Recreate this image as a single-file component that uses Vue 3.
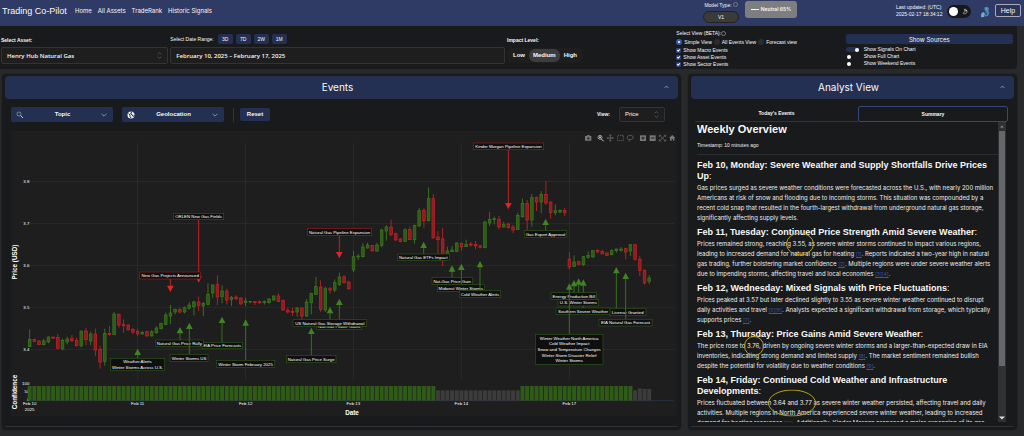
<script setup>
import { ref } from 'vue'

const asset = ref('Henry Hub Natural Gas')
const dateRange = ref('February 10, 2025 – February 17, 2025')
const viewMode = ref('Simple View')
const impact = ref('Medium')

const navLinks = ['Home', 'All Assets', 'TradeRank', 'Historic Signals']
const ranges = ['3D', '7D', '2W', '1M']
const impacts = ['Low', 'Medium', 'High']
const views = ['Simple View', 'All Events View', 'Forecast view']
const shownEvents = ['Show Macro Events', 'Show Asset Events', 'Show Sector Events']
const switches = [
  { label: 'Show Signals On Chart', on: true },
  { label: 'Show Full Chart', on: false },
  { label: 'Show Weekend Events', on: false },
]

// Chart units: one bar every STEP units, y grows downwards.
const X0 = 89
const STEP = 14.08
const barX = (i) => X0 + STEP * i

// direction, high, body top, body bottom, low
const candleRows = `
G 610 640 662 662;R 638 640 646 648;R 642 645 656 658;G 638 645 656 658;G 631 633 648 652;R 632 633 637 637;
R 624 634 667 669;G 637 643 669 673;G 632 639 648 655;R 627 638 644 648;R 635 643 659 662;G 614 615 660 664;
R 605 615 641 658;G 617 624 645 658;R 608 624 672 690;R 660 670 708 728;G 608 622 706 719;R 600 622 626 629;
G 558 564 626 627;R 562 565 597 605;R 580 596 599 620;R 595 597 612 613;R 606 610 618 625;R 608 616 624 630;
G 615 619 624 626;R 614 617 630 631;G 612 617 630 631;G 601 606 620 623;G 590 592 608 610;G 560 567 595 597;
G 537 561 570 594;G 548 550 558 565;R 546 550 558 562;G 542 545 558 562;G 528 537 547 550;G 524 528 542 568;
R 512 528 538 555;G 528 532 540 570;G 472 505 535 538;G 475 477 501 516;R 448 476 513 537;G 478 495 512 532;
R 488 495 522 535;G 510 514 520 540;R 508 513 518 523;R 514 516 534 536;G 515 525 530 540;G 525 526 528 532;
R 525 527 530 537;R 524 527 530 534;G 523 527 530 536;G 516 519 530 533;G 508 510 522 525;R 502 510 527 528;
R 520 523 552 555;R 545 553 558 562;R 545 556 559 570;G 543 546 558 572;R 545 546 570 580;G 520 528 570 573;
G 500 502 530 565;G 453 482 505 507;R 463 483 550 558;G 482 488 552 558;R 483 488 492 503;G 460 470 492 498;
G 440 453 475 480;R 448 452 470 473;R 464 468 488 492;G 375 392 432 438;G 384 390 393 402;G 352 363 392 394;
G 350 357 366 368;R 357 358 375 376;G 350 357 375 377;G 308 312 358 364;G 297 303 315 344;R 281 303 326 330;
R 320 323 342 344;R 336 339 347 349;G 307 311 346 348;R 301 311 341 342;G 296 298 341 353;G 246 254 300 302;
R 247 253 284 305;G 184 218 284 287;R 204 218 336 338;R 315 333 341 384;R 306 339 390 420;G 362 375 388 390;
G 360 372 377 378;G 349 351 376 378;R 350 352 363 375;G 341 355 362 363;R 348 354 357 362;R 345 355 360 370;
R 357 359 364 367;G 284 288 365 367;G 258 280 291 300;G 272 278 281 295;R 270 280 303 310;G 287 296 303 304;
R 290 294 305 308;R 297 303 312 322;G 260 268 311 312;G 218 232 272 275;R 222 232 282 315;G 204 215 282 302;
R 212 214 228 255;G 195 205 228 262;R 165 205 231 237;R 226 228 260 278;G 235 254 260 268;G 250 253 258 262;
R 246 253 260 270;R 378 399 423 430;G 388 408 421 423;R 404 407 415 418;G 390 392 416 420;G 377 388 394 398;
G 372 374 393 395;R 369 373 378 380;R 371 376 384 384;R 379 381 388 390;G 370 374 386 388;G 368 369 374 380;
G 363 369 373 377;R 365 368 378 400;G 355 356 375 390;R 355 356 400 404;R 390 400 433 450;R 430 433 471 475;
G 448 456 466 475`

const candles = candleRows
  .trim()
  .split(/;\s*/)
  .map((row, i) => {
    const [dir, high, top, bottom, low] = row.split(' ')
    return { x: barX(i), up: dir === 'G', high: +high, top: +top, height: bottom - top, low: +low }
  })

const confidence = candles.map((c, i) => {
  const neutral = (i > 86 && i < 105) || i > 128
  let top = 780
  if (neutral) top = i === 130 ? 787 : i > 130 ? 789 : 793
  return { x: c.x, neutral, top }
})

const days = [
  { x: 89, label: 'Feb 10' },
  { x: 413, label: 'Feb 11' },
  { x: 737, label: 'Feb 12' },
  { x: 1060, label: 'Feb 13' },
  { x: 1384, label: 'Feb 14' },
  { x: 1708, label: 'Feb 17' },
]
const prices = [
  { y: 167, label: '3.8' },
  { y: 293, label: '3.7' },
  { y: 418, label: '3.6' },
  { y: 544, label: '3.5' },
  { y: 670, label: '3.4' },
]

const note = (kind, x1, x2, y1, y2, ax, tip, ...lines) => ({ kind, x1, x2, y1, y2, ax, tip, lines })
const notes = [
  note('down', 520, 671, 262, 281, 596, 470, 'ORLEN New Gas Fields'),
  note('down', 419, 602, 438, 459, 511, 498, 'New Gas Projects Announced'),
  note('down', 922, 1115, 307, 328, 1018, 397, 'Natural Gas Pipeline Expansion'),
  note('down', 1420, 1631, 51, 71, 1525, 250, 'Kinder Morgan Pipeline Expansion'),
  note('up', 331, 494, 697, 734, 413, 668, 'Weather Alerts', 'Winter Storms Across U.S.'),
  note('up', 606, 727, 649, 668, 666, 572, 'EIA Price Forecasts'),
  note('up', 466, 610, 642, 661, 540, 603, 'Natural Gas Price Rally'),
  note('up', 510, 624, 685, 706, 568, 590, 'Winter Storms US'),
  note('up', 649, 824, 703, 724, 737, 580, 'Winter Storm February 2025'),
  note('up', 859, 1008, 688, 710, 934, 605, 'Natural Gas Price Surge'),
  note('up', 950, 1085, 590, 610, 990, 543, 'Nat-Gas Power Gains'),
  note('up', 879, 1100, 581, 601, 1018, 518, 'US Natural Gas Storage Withdrawal'),
  note('up', 1192, 1348, 384, 403, 1271, 347, 'Natural Gas ETFs Impact'),
  note('up', 1296, 1417, 455, 475, 1356, 418, 'Nat-Gas Price Gain'),
  note('up', 1312, 1453, 476, 496, 1384, 413, 'Midwest Winter Storms'),
  note('up', 1378, 1502, 494, 515, 1440, 405, 'Cold Weather Alerts'),
  note('up', 1573, 1700, 314, 334, 1637, 278, 'Gas Export Approval'),
  note('up', 1828, 1938, 547, 568, 1849, 423, 'License Granted'),
  note('up', 1668, 1830, 546, 566, 1750, 460, 'Southern Severe Weather'),
  note('up', 1674, 1796, 520, 540, 1736, 457, 'U.S. Winter Storms'),
  note('up', 1653, 1790, 500, 520, 1722, 462, 'Energy Production Bill'),
  note('up', 1797, 1956, 580, 600, 1877, 440, 'EIA Natural Gas Forecast'),
  note('up', 1606, 1809, 625, 715, 1708, 472,
    'Winter Weather North America', 'Cold Weather Impact', 'Snow and Temperature Changes',
    'Winter Storm Disaster Relief', 'Winter Storms'),
]
const lineY = (n, i) => (n.y1 + n.y2) / 2 + (i - (n.lines.length - 1) / 2) * 17 + 5
const arrowHead = (n) => {
  const back = n.kind === 'up' ? n.tip + 19 : n.tip - 19
  return `${n.ax},${n.tip} ${n.ax - 10},${back} ${n.ax + 10},${back}`
}
</script>

<template>
  <div class="app">
    <header class="topbar">
      <div class="brand">Trading Co-Pilot</div>
      <nav>
        <a v-for="l in navLinks" :key="l" href="#">{{ l }}</a>
      </nav>
      <div class="model">
        <span>Model Type: <i class="info"></i></span>
        <button class="v1">V1</button>
      </div>
      <div class="signal"><i></i>Neutral 65%</div>
      <div class="updated">Last updated: (UTC)<br />2025-02-17 18:34:12</div>
      <button class="theme" aria-label="Toggle theme">
        <i></i>
        <svg viewBox="0 0 12 12"><path d="M4 2a4 4 0 1 1-2 7 5 5 0 0 0 2-7z" fill="none" stroke="#ddd" /><path d="M7 3v3M5.500 4.500h3" stroke="#ddd" /></svg>
      </button>
      <svg class="mascot" viewBox="0 0 30 36">
        <path d="M14 4l8-2 5 5-2 7 3 6-4 9-8 3-2-9 3-7-4-6z" fill="#4d86b8" />
        <path d="M4 22l7-4 4 6-3 9-9 1zM17 8l4-1 1 4-4 1z" fill="#76a9cf" />
        <path d="M16 18l6 2-2 8-5-2z" fill="#2b5488" />
      </svg>
      <button class="help">Help</button>
    </header>

    <section class="filters">
      <div class="field">
        <label class="cap bold" for="asset">Select Asset:</label>
        <div class="selectbox">
          <select id="asset" v-model="asset"><option>Henry Hub Natural Gas</option></select>
          <svg viewBox="0 0 8 12"><path d="M1 4l3-3 3 3M1 8l3 3 3-3" /></svg>
        </div>
      </div>
      <div class="field">
        <div class="cap">
          <label for="dates">Select Date Range:</label>
          <button v-for="r in ranges" :key="r" class="range">{{ r }}</button>
        </div>
        <input id="dates" v-model="dateRange" class="dates" type="text" />
      </div>
      <div class="field">
        <div class="cap bold">Impact Level:</div>
        <div class="impact-row">
          <div class="segments">
            <button v-for="i in impacts" :key="i" :class="{ active: i === impact }" @click="impact = i">{{ i }}</button>
          </div>
        </div>
      </div>
      <div class="viewcol">
        <div class="line">Select View (BETA):<i class="info"></i></div>
        <div class="line radios">
          <label v-for="v in views" :key="v"><input v-model="viewMode" type="radio" name="view" :value="v" />{{ v }}</label>
        </div>
        <label v-for="e in shownEvents" :key="e" class="line check"><input type="checkbox" checked />{{ e }}</label>
      </div>
      <div class="sources">
        <button class="show">Show Sources</button>
        <label v-for="s in switches" :key="s.label" class="line switch">
          <input type="checkbox" :checked="s.on" /><span>{{ s.label }}</span>
        </label>
      </div>
    </section>

    <main>
      <section class="panel">
        <h2>Events<svg viewBox="0 0 8 5"><path d="M1 4l3-3 3 3" /></svg></h2>
        <div class="tools">
          <button class="drop">
            <svg viewBox="0 0 16 16"><circle cx="6" cy="6" r="4" /><path d="M9 9l5 5" stroke-width="2" /></svg>
            <span>Topic</span>
            <svg class="chev" viewBox="0 0 10 10"><path d="M1 3l4 4 4-4" /></svg>
          </button>
          <button class="drop">
            <svg viewBox="0 0 16 16"><circle cx="8" cy="8" r="7" fill="#f2f2f2" stroke="none" /><path d="M3 5l3 3v3l2 3M8 1l1 3-2 2 4 2 1 3 3-2" stroke="#233052" stroke-width="2" /></svg>
            <span>Geolocation</span>
            <svg class="chev" viewBox="0 0 10 10"><path d="M1 3l4 4 4-4" /></svg>
          </button>
          <i class="rule"></i>
          <button class="reset">Reset</button>
          <label class="viewlabel" for="series">View:</label>
          <div class="selectbox small">
            <select id="series"><option>Price</option></select>
            <svg viewBox="0 0 8 12"><path d="M1 4l3-3 3 3M1 8l3 3 3-3" /></svg>
          </div>
        </div>

        <svg class="chart" viewBox="33 15 1998 855" role="img" aria-label="Henry Hub Natural Gas price chart">
          <g class="grid">
            <path v-for="p in prices" :key="p.label" :d="`M88 ${p.y}H2022`" />
            <path v-for="d in days.slice(1)" :key="d.label" :d="`M${d.x} 50V762`" />
          </g>
          <g class="tick">
            <text v-for="p in prices" :key="p.label" x="88" :y="p.y + 5" text-anchor="end">{{ p.label }}</text>
            <text x="88" y="777" text-anchor="end">100</text>
            <text x="88" y="802" text-anchor="end">50</text>
            <text x="88" y="825" text-anchor="end">0</text>
            <text v-for="d in days" :key="d.label" :x="d.x" y="838" text-anchor="middle">{{ d.label }}</text>
            <text x="89" y="854" text-anchor="middle">2025</text>
          </g>
          <text class="axis" x="1056" y="867" text-anchor="middle">Date</text>
          <text class="axis" transform="translate(52 408) rotate(-90)" text-anchor="middle">Price (USD)</text>
          <text class="axis" transform="translate(52 798) rotate(-90)" text-anchor="middle">Confidence</text>

          <path d="M88 824H2022" stroke="#2c3a55" stroke-width="2" />
          <rect v-for="b in confidence" :key="b.x" :x="b.x - 6" :y="b.top" width="12" :height="824 - b.top" :class="b.neutral ? 'neutral' : 'sure'" />

          <g v-for="c in candles" :key="c.x" :class="c.up ? 'up' : 'down'">
            <path class="wick" :d="`M${c.x} ${c.high}V${c.low}`" />
            <rect class="body" :x="c.x - 4" :y="c.top" width="8" :height="c.height" />
          </g>

          <g v-for="n in notes" :key="n.lines[0]" :class="['note', n.kind]">
            <path class="stem" :d="n.kind === 'up' ? `M${n.ax} ${n.tip + 12}V${n.y1}` : `M${n.ax} ${n.y2}V${n.tip - 12}`" />
            <polygon :points="arrowHead(n)" />
            <rect class="frame" :x="n.x1" :y="n.y1" :width="n.x2 - n.x1" :height="n.y2 - n.y1" />
            <text v-for="(t, i) in n.lines" :key="t" :x="(n.x1 + n.x2) / 2" :y="lineY(n, i)" text-anchor="middle">{{ t }}</text>
          </g>

          <g class="modebar">
            <path class="solid" d="M1755 30h5l2-3h6l2 3h4v14h-19z" />
            <circle cx="1765" cy="37" r="4" fill="#1e1e1e" />
            <g class="on"><circle cx="1800" cy="34" r="6" /><path d="M1804 39l7 7M1797 34h6M1800 31v6" stroke-width="3" /></g>
            <path d="M1831 27v18M1822 36h18M1828 29l3-3 3 3M1828 43l3 3 3-3M1825 33l-3 3 3 3M1837 33l3 3-3 3" />
            <rect x="1853" y="28" width="17" height="16" stroke-dasharray="4 2" />
            <path d="M1886 42c-8-6-4-14 5-14s12 9 4 12c-4 1-8-1-9 2l3 4" />
            <rect class="solid" x="1920" y="28" width="18" height="17" /><path d="M1929 32v9M1924 36h10" stroke="#1e1e1e" stroke-width="3" />
            <rect class="solid" x="1949" y="28" width="18" height="17" /><path d="M1953 36h10" stroke="#1e1e1e" stroke-width="3" />
            <path d="M1979 28l17 17M1996 28l-17 17M1978 33v-5h5M1992 28h5v5M1997 40v5h-5M1983 45h-5v-5" />
            <path class="solid" d="M2007 36l10-9 9 9h-3v8h-4v-5h-4v5h-5v-8z" />
          </g>
        </svg>
        <i class="foot"></i>
      </section>

      <section class="panel">
        <h2>Analyst View<svg viewBox="0 0 8 5"><path d="M1 4l3-3 3 3" /></svg></h2>
        <div class="tabs">
          <button>Today's Events</button>
          <button class="current">Summary</button>
        </div>
        <div class="scroller">
          <article>
            <h1>Weekly Overview</h1>
            <p class="stamp">Timestamp: 10 minutes ago</p>
            <h3>Feb 10, Monday: Severe Weather and Supply Shortfalls Drive Prices Up<span>:</span></h3>
            <p>Gas prices surged as severe weather conditions were forecasted across the U.S., with nearly 200 million Americans at risk of snow and flooding due to incoming storms. This situation was compounded by a recent cold snap that resulted in the fourth-largest withdrawal from underground natural gas storage, significantly affecting supply levels.</p>
            <h3>Feb 11, Tuesday: Continued Price Strength Amid Severe Weather<span>:</span></h3>
            <p>Prices remained strong, reaching <span class="mark">3.55,<svg class="ring r1" viewBox="0 0 28 23"><ellipse cx="14" cy="11.500" rx="13.500" ry="11" /></svg></span> as severe winter storms continued to impact various regions, leading to increased demand for natural gas for heating <a href="#">[1]</a>. Reports indicated a two-year high in natural gas trading, further bolstering market confidence <a href="#">[2]</a>. Multiple regions were under severe weather alerts due to impending storms, affecting travel and local economies <a href="#">[3][4]</a>.</p>
            <h3>Feb 12, Wednesday: Mixed Signals with Price Fluctuations<span>:</span></h3>
            <p>Prices peaked at 3.57 but later declined slightly to 3.55 as severe winter weather continued to disrupt daily activities and travel <a href="#">[5][6]</a>. Analysts expected a significant withdrawal from storage, which typically supports prices <a href="#">[7]</a>.</p>
            <h3>Feb 13, Thursday: Price Gains Amid Severe Weather<span>:</span></h3>
            <p>The price rose to <span class="mark">3.76,<svg class="ring r2" viewBox="0 0 20 20"><ellipse cx="10" cy="10" rx="9.500" ry="9.500" /></svg></span> driven by ongoing severe winter storms and a larger-than-expected draw in EIA inventories, indicating strong demand and limited supply <a href="#">[8]</a>. The market sentiment remained bullish despite the potential for volatility due to weather conditions <a href="#">[9]</a>.</p>
            <h3>Feb 14, Friday: Continued Cold Weather and Infrastructure Developments<span>:</span></h3>
            <p>Prices fluctuated between <span class="mark">3.64 and 3.77<svg class="ring r3" viewBox="0 0 48 27"><ellipse cx="24" cy="13.500" rx="23.500" ry="13" /></svg></span> as severe winter weather persisted, affecting travel and daily activities. Multiple regions in North America experienced severe winter weather, leading to increased demand for heating resources <a href="#">[10]</a>. Additionally, Kinder Morgan proposed a major expansion of its gas</p>
          </article>
          <div class="scrollbar" aria-hidden="true">
            <svg viewBox="0 0 8 8"><path d="M2 5l2-2 2 2z" /></svg>
            <i></i>
            <svg class="end" viewBox="0 0 8 8"><path d="M1 3l3 3 3-3z" fill="#ddd" /></svg>
          </div>
        </div>
        <i class="foot"></i>
      </section>
    </main>
  </div>
</template>

<style>
html, body { background: #28292b; }
</style>

<style scoped>
.app { height: 100vh; display: flex; flex-direction: column; overflow: hidden; color: #f8f8f8; font: 5px/7px "Liberation Sans", Arial, sans-serif; background: #28292b; }
.app *, .app *::before { box-sizing: border-box; }
button, input, select { font: inherit; color: inherit; margin: 0; padding: 0; border: 0; background: none; }
a { color: inherit; text-decoration: none; }
i { display: block; }
svg { fill: none; stroke: #ccc; display: block; }

.topbar { height: 26px; flex: none; display: flex; align-items: center; background: #2f3b65; padding: 0 3px 0 2px; }
.brand { font-size: 9px; line-height: 12px; margin-bottom: 4px; width: 73px; white-space: nowrap; }
nav { display: flex; gap: 6px; font: 6px/8px Inter, sans-serif; margin-bottom: 4px; flex: 1; white-space: nowrap; }
.model { display: flex; flex-direction: column; align-items: center; gap: 2px; height: 22px; width: 36px; white-space: nowrap; }
.model span { display: flex; gap: 1px; }
.info { width: 5px; height: 5px; border: 1px solid #777; border-radius: 50%; }
.v1 { width: 36px; height: 12px; border-radius: 6px; background: #3a3a3b; border: 1px solid #222; }
.signal { width: 52px; height: 17px; margin: 0 99px 7px 6px; border-radius: 3px; background: #7d7e80; display: flex; align-items: center; justify-content: center; gap: 2px; white-space: nowrap; font: 600 5px/7px Inter, sans-serif; }
.signal i { width: 8px; height: 1px; background: #fff; }
.updated { width: 46px; margin: 0 5px 4px 0; white-space: nowrap; }
.theme { width: 24px; height: 13px; margin-bottom: 3px; border-radius: 7px; background: #16181b; display: flex; align-items: center; gap: 4px; padding: 0 2px; }
.theme i { width: 9px; height: 9px; border-radius: 50%; background: #fff; }
.theme svg { width: 7px; height: 7px; }
.mascot { width: 10px; height: 12px; margin: 0 5px 2px 9px; stroke: none; }
.help { width: 26px; height: 13px; margin-bottom: 5px; border: 1px solid #aab; border-radius: 2px; background: #2b355a; font-size: 7px; }

.filters { flex: none; display: grid; grid-template-columns: 1fr 2fr 1fr 1fr 1fr; gap: 2px; padding: 3px 4px 3px 1px; margin-right: 7px; height: 43px; background: #191a1c; border-radius: 0 0 4px 0; }
.field { display: flex; flex-direction: column; gap: 2px; padding-top: 4px; min-width: 0; }
.cap { height: 12px; display: flex; align-items: center; gap: 3px; }
.bold { font-weight: bold; padding-top: 2px; }
.cap label { margin-right: 1px; }
.range { width: 15px; height: 10px; border-radius: 2px; background: #233052; }
.selectbox { position: relative; height: 17px; }
.selectbox select, .dates { width: 100%; height: 17px; appearance: none; background: #1e1e1e; border: 1px solid #333; border-radius: 2px; padding: 0 5px; font: 600 6px/10px "Open Sans", sans-serif; }
.selectbox svg { position: absolute; right: 6px; top: 5px; width: 5px; height: 7px; stroke: #777; }
.impact-row { height: 17px; display: flex; align-items: center; }
.segments { display: flex; height: 15px; border-radius: 6px; background: #1e1e1e; padding: 1px 2px; font-weight: bold; font-size: 6px; }
.segments button { padding: 0 4px; border-radius: 6px; }
.segments .active { background: #3d3d3f; }
.viewcol, .sources { display: flex; flex-direction: column; white-space: nowrap; min-width: 0; }
.viewcol { padding-top: 1px; }
.line { display: flex; align-items: center; height: 7px; }
.radios { height: 10px; gap: 2px; }
.radios label { display: flex; align-items: center; gap: 2px; }
.radios input { appearance: none; width: 6px; height: 6px; border-radius: 50%; background: #2b2c2e; }
.radios input:checked { background: #fff; border: 2px solid #3a5cae; }
.check input { appearance: none; width: 5px; height: 5px; margin-right: 2px; background: #2c3e78; border-radius: 1px; position: relative; }
.check input::before { content: ""; position: absolute; left: 1px; top: 1px; width: 3px; height: 2px; border: solid #fff; border-width: 0 0 1px 1px; transform: rotate(-45deg); }
.show { height: 10px; margin: 5px 0 2px; border-radius: 2px; background: #233052; font: 6px/9px Inter, sans-serif; flex: none; }
.switch input { appearance: none; width: 13px; height: 5px; margin-right: 5px; border-radius: 3px; display: flex; align-items: center; }
.switch input::before { content: ""; width: 4px; height: 4px; border-radius: 50%; background: #fff; margin-left: 1px; }
.switch input:checked { background: #233052; justify-content: flex-end; }

main { flex: 1; min-height: 0; display: grid; grid-template-columns: 681fr 331fr; gap: 5px; padding: 4px 6px 5px 1px; }
.panel { min-width: 0; min-height: 0; background: #191a1c; border: 1px solid #222426; border-radius: 5px; padding: 2px 3px; display: flex; flex-direction: column; }
h2 { margin: 0; height: 23px; flex: none; padding-right: 8px; border-radius: 4px; background: #233052; font: 10px/23px Inter, sans-serif; text-align: center; position: relative; }
h2 svg { position: absolute; right: 9px; top: 9px; width: 5px; height: 4px; }
.tools { display: flex; align-items: center; height: 15px; margin: 8px 13px 9px 6px; gap: 9px; font-size: 6px; font-weight: bold; }
.drop { width: 102px; height: 15px; border-radius: 2px; background: #233052; display: flex; align-items: center; padding: 0 6px 0 5px; }
.drop span { flex: 1; text-align: center; }
.drop svg { width: 8px; height: 8px; }
.drop .chev { width: 6px; height: 6px; }
.rule { width: 1px; height: 14px; background: #333; }
.reset { width: 30px; height: 13px; margin-left: -3px; border-radius: 2px; background: #233052; }
.viewlabel { margin-left: auto; font-size: 5px; }
.small { width: 46px; height: 15px; }
.small select { height: 15px; font: 6px/9px "Liberation Sans", sans-serif; }
.small svg { top: 4px; }
.foot { height: 1px; background: #303133; margin-top: auto; margin-bottom: 1px; flex: none; }

.chart { width: calc(100% - 7px); margin-left: 6px; background: #1e1e1e; stroke: none; flex: none; }
.chart text { fill: #fff; font-size: 13px; }
.chart .axis { font-size: 19px; font-weight: bold; }
.grid path { stroke: #303030; stroke-width: 2; }
.sure { fill: #2f5b18; }
.neutral { fill: #3c3c3c; }
.wick, .stem { stroke-width: 3; }
.body { stroke-width: 2; }
.up .wick { stroke: #37701b; }
.up .body { fill: #2d5a17; stroke: #3d7a1e; }
.down .wick { stroke: #b02024; }
.down .body { fill: #8c1c1f; stroke: #c42529; }
.frame { fill: #0f0f0f; stroke-width: 2; }
.up .stem { stroke: #37701b; }
.up .frame { stroke: #2c5518; }
.up polygon { fill: #3f8420; }
.down .stem { stroke: #c02226; }
.down .frame { stroke: #9c1c20; }
.down polygon { fill: #d8262b; }
.modebar { stroke: #777; stroke-width: 2; }
.modebar .solid { fill: #777; stroke: none; }
.modebar .on { stroke: #ccc; }

.tabs { display: grid; grid-template-columns: 163fr 150fr; margin: 7px 6px 0 4px; height: 16px; flex: none; }
.tabs button { border-bottom: 1px solid #333; font-weight: bold; }
.tabs .current { border: 1px solid #35467c; border-radius: 2px; }
.scroller { flex: 1; min-height: 0; display: flex; margin: 0 8px 4px 6px; overflow: hidden; }
article { flex: 1; min-width: 0; overflow: hidden; }
h1 { margin: 0; font-size: 11px; line-height: 15px; }
.stamp { line-height: 8px; margin: 4px 0 5px; padding-bottom: 5px; border-bottom: 1px solid #2c2d2f; }
h3 { margin: 4px 0 1px; font-size: 9px; line-height: 11px; }
h3 span { font-weight: normal; }
article p { margin: 0; color: #eee; }
h3 + p { font: 6px/10px Inter, sans-serif; }
article a { color: #3c559c; font-size: 5px; line-height: 7px; text-decoration: underline; }
.mark { position: relative; white-space: nowrap; }
.ring { position: absolute; stroke: #b8a41c; left: 50%; top: 50%; transform: translate(-50%, -50%); }
.r1 { width: 28px; height: 23px; }
.r2 { width: 20px; height: 20px; }
.r3 { width: 48px; height: 27px; }
.scrollbar { width: 8px; flex: none; background: #303133; display: flex; flex-direction: column; }
.scrollbar svg { width: 8px; height: 9px; stroke: none; fill: #888; }
.scrollbar i { width: 6px; height: 235px; margin: 0 1px; background: #66676a; }
.scrollbar .end { margin-top: auto; }
</style>
